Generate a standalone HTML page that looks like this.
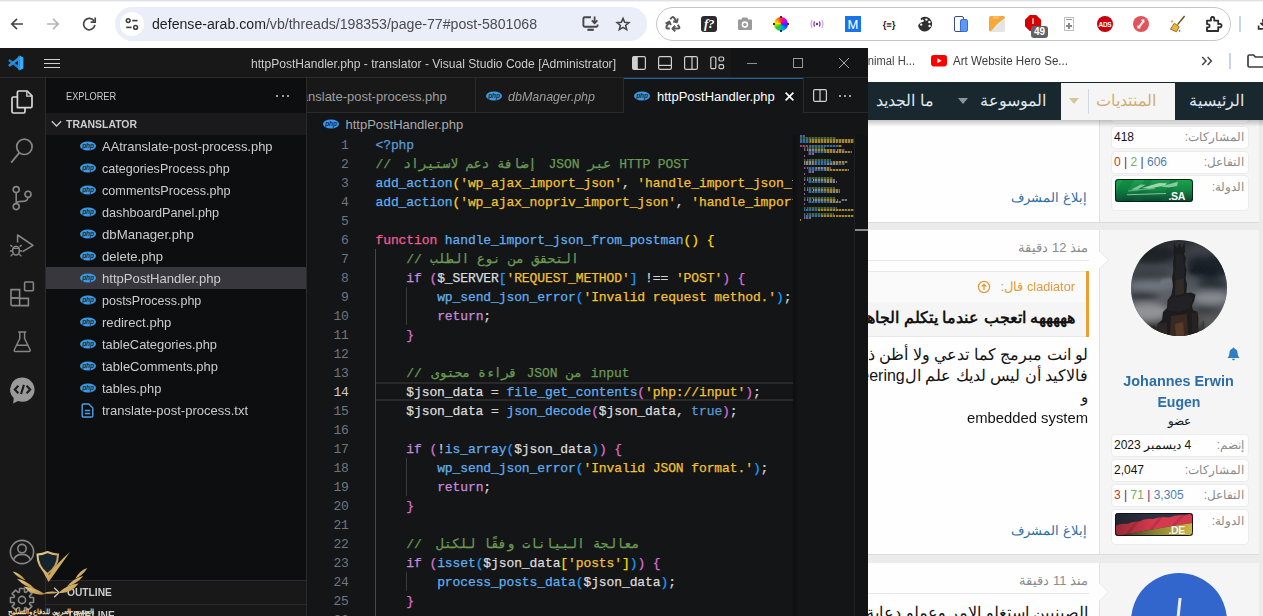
<!DOCTYPE html>
<html lang="en"><head><meta charset="utf-8"><title>screenshot</title>
<style>
*{box-sizing:border-box;margin:0;padding:0}
html,body{width:1263px;height:616px;overflow:hidden;background:#fff;font-family:"Liberation Sans",sans-serif}
#root{position:relative;width:1263px;height:616px;overflow:hidden;background:#fff}
.a{position:absolute}
.t{position:absolute;white-space:nowrap;line-height:1}
svg{position:absolute;overflow:visible}
/* ---------- browser ---------- */
#urlpill{left:115px;top:7px;width:532px;height:34px;border-radius:17px;background:#e9eef8}
#extpill{left:656px;top:7px;width:575px;height:34px;border-radius:17px;border:1px solid #c4c7c5;background:#fff}
/* ---------- forum ---------- */
#forum{left:868px;top:82px;width:395px;height:534px;background:#ebebeb;overflow:hidden}
.ar{direction:rtl;unicode-bidi:isolate}
.box{position:absolute;left:243px;width:138px;height:23px;background:#fefefe;border:1px solid #ececec;border-radius:4px}
.lbl{position:absolute;right:4px;top:0;line-height:21px;font-size:12px;color:#8c8c8c;white-space:nowrap;direction:rtl}
.val{position:absolute;left:2px;top:0;line-height:21px;font-size:12px;color:#141414;white-space:nowrap}
/* ---------- vscode ---------- */
#vs{left:0;top:48px;width:868px;height:568px;background:#181818;overflow:hidden;color:#ccc}
#side{left:46px;top:30px;width:260px;height:538px;background:#0d0e10}
.row{position:absolute;left:0;width:260px;height:22px}
.row .n{position:absolute;left:56px;top:1px;line-height:22px;font-size:13px;color:#cccccc;white-space:nowrap}
.row svg{left:34px;top:6px}
#ed{left:307px;top:65px;width:561px;height:503px;background:#141517;overflow:hidden}
.ln{position:absolute;left:0;width:41.8px;text-align:right;font-family:"Liberation Mono",monospace;font-size:13px;letter-spacing:-0.1px;line-height:19px;height:19px;color:#6e7681;padding-top:1px}
.cl{position:absolute;left:68.5px;white-space:pre;font-family:"Liberation Mono",monospace;font-size:13px;letter-spacing:-0.1px;line-height:19px;height:19px;color:#d8d8d8;padding-top:1px;-webkit-text-stroke:.25px}
.k{color:#ee5d93}.c{color:#6a9955}.f{color:#61afef}.s{color:#f3c231}.p{color:#5a9bd5}.q{color:#c98bdb}
.b1{color:#ffd700}.b2{color:#da70d6}.b3{color:#179fff}.v{color:#dcdcdc}.w{color:#d4d4d4}
.arb{display:inline-block;text-align:center;white-space:nowrap;direction:rtl;letter-spacing:0}
.ig{position:absolute;width:1px;background:#3a3a3a}
</style></head><body><div id="root">
<!-- ================= BROWSER CHROME ================= -->
<div class="a" style="left:0;top:0;width:1263px;height:1px;background:#dde1e7"></div>
<div class="a" style="left:0;top:1px;width:1263px;height:1px;background:#f1f3f6"></div>
<!-- back -->
<svg style="left:9px;top:16px" width="16" height="16" viewBox="0 0 16 16"><path d="M14 8H3M8 2.8L2.8 8L8 13.2" fill="none" stroke="#474747" stroke-width="1.7"/></svg>
<!-- forward -->
<svg style="left:45px;top:16px" width="16" height="16" viewBox="0 0 16 16"><path d="M2 8H13M8 2.8L13.2 8L8 13.2" fill="none" stroke="#b5b5b5" stroke-width="1.7"/></svg>
<!-- reload -->
<svg style="left:81px;top:16px" width="16" height="16" viewBox="0 0 16 16"><path d="M13.2 5.2A5.7 5.7 0 1 0 13.9 8.9" fill="none" stroke="#474747" stroke-width="1.7"/><path d="M14.2 1.6V6.2H9.6" fill="none" stroke="#474747" stroke-width="1.7"/></svg>
<div class="a" id="urlpill"></div>
<div class="a" style="left:120px;top:12px;width:24px;height:24px;border-radius:12px;background:#fff"></div>
<!-- tune icon -->
<svg style="left:125px;top:17px" width="14" height="14" viewBox="0 0 14 14"><circle cx="3.2" cy="3.6" r="1.9" fill="none" stroke="#3c3c3c" stroke-width="1.5"/><path d="M7.2 3.6H12.6" stroke="#3c3c3c" stroke-width="1.6"/><circle cx="10.6" cy="10.4" r="1.9" fill="none" stroke="#3c3c3c" stroke-width="1.5"/><path d="M1.2 10.4H6.6" stroke="#3c3c3c" stroke-width="1.6"/></svg>
<div class="t" style="left:152px;top:16px;font-size:14px;line-height:16px;color:#484b4f;transform-origin:0 0;transform:scaleX(1.0095)"><span style="color:#1f1f1f">defense-arab.com</span>/vb/threads/198353/page-77#post-5801068</div>
<!-- install icon -->
<svg style="left:582px;top:16px" width="18" height="16" viewBox="0 0 18 16"><path d="M9 1.2H2.6Q1.4 1.2 1.4 2.4V9.6Q1.4 10.8 2.6 10.8H14.4Q15.6 10.8 15.6 9.6V8.6" fill="none" stroke="#474747" stroke-width="1.9"/><path d="M5.4 13.8H11.8" stroke="#474747" stroke-width="2.2"/><path d="M12.6 0.6V7M9.8 4.4L12.6 7.2L15.4 4.4" fill="none" stroke="#474747" stroke-width="1.8"/></svg>
<!-- star -->
<svg style="left:616px;top:17px" width="14" height="14" viewBox="0 0 16 16"><path d="M8 1.6L9.9 6.1L14.7 6.5L11 9.7L12.2 14.4L8 11.9L3.8 14.4L5 9.7L1.3 6.5L6.1 6.1Z" fill="none" stroke="#474747" stroke-width="1.8" stroke-linejoin="miter"/></svg>
<div class="a" id="extpill"></div>
<!-- ext 1: recycle arrows -->
<svg style="left:665px;top:16px" width="16" height="16" viewBox="0 0 16 16" fill="none" stroke="#585858" stroke-width="2" stroke-linejoin="round"><path d="M5.4 3.4Q7.4 -.6 9.4 2.2L11.2 5.2"/><path d="M8.2 5.2L11.8 6.2L12.8 2.6"/><path d="M4 6.2L1.6 10.2Q.8 12.4 3 12.6H4.8"/><path d="M.6 7.6L4.4 5.6L5.8 9.2"/><path d="M12.8 8.8L14.2 11Q15 12.6 13 12.6H8"/><path d="M10.2 9.8L7.4 12.6L10.2 15.4"/></svg>
<!-- ext 2: f? -->
<div class="a" style="left:701px;top:16px;width:16px;height:16px;border-radius:3px;background:#2b2b2b"></div>
<div class="t" style="left:702px;top:17px;width:14px;text-align:center;font:italic bold 13px/14px 'Liberation Serif',serif;color:#fff;letter-spacing:-0.5px">f?</div>
<!-- ext 3: camera -->
<svg style="left:737px;top:17px" width="16" height="14" viewBox="0 0 16 14"><path d="M1 3.4Q1 2.4 2 2.4H4.4L5.4 .6H10.2L11.2 2.4H14Q15 2.4 15 3.4V12Q15 13 14 13H2Q1 13 1 12Z" fill="#9a9a9a"/><circle cx="7.9" cy="7.6" r="3.3" fill="#fff"/><circle cx="7.9" cy="7.6" r="1.7" fill="#9a9a9a"/></svg>
<!-- ext 4: colour wheel -->
<div class="a" style="left:774px;top:17px;width:14px;height:14px;border-radius:7px;transform:scaleX(-1);background:conic-gradient(#ff2a2a,#ff9a00 45deg,#ffe600 80deg,#35d000 130deg,#00c8a0 170deg,#0090ff 215deg,#3030ff 255deg,#b000ff 300deg,#ff00a0 335deg,#ff2a2a)"></div>
<div class="a" style="left:780px;top:16px;width:2px;height:2px;background:#333"></div><div class="a" style="left:780px;top:30px;width:2px;height:2px;background:#333"></div><div class="a" style="left:773px;top:23px;width:2px;height:2px;background:#333"></div><div class="a" style="left:787px;top:23px;width:2px;height:2px;background:#333"></div>
<!-- ext 5: broadcast -->
<svg style="left:809px;top:17px" width="16" height="14" viewBox="0 0 16 14" fill="none"><circle cx="8" cy="7" r="1.2" fill="#6a2c91"/><path d="M5.6 4.4Q4.2 7 5.6 9.6M10.4 4.4Q11.8 7 10.4 9.6" stroke="#8e3bb5" stroke-width="1.3"/><path d="M3.2 2.8Q.8 7 3.2 11.2M12.8 2.8Q15.2 7 12.8 11.2" stroke="#d59be8" stroke-width="1.1"/></svg>
<!-- ext 6: M -->
<div class="a" style="left:845px;top:16px;width:16px;height:16px;background:#1a73e8"></div>
<div class="t" style="left:845px;top:17px;width:16px;text-align:center;font-size:13px;line-height:15px;color:#fff">M</div>
<!-- ext 7: {=} -->
<div class="t" style="left:880px;top:17.5px;width:18px;text-align:center;font:bold 9.5px/14px 'Liberation Sans',sans-serif;color:#222;letter-spacing:-0.2px">{&#8801;}</div>
<!-- ext 8: palette -->
<svg style="left:917px;top:16px" width="16" height="16" viewBox="0 0 16 16"><path d="M8 .8A7.2 7.2 0 1 0 8 15.2Q9.4 15.2 9.4 14Q9.4 13.4 9 13Q8.6 12.4 9 11.8Q9.4 11.2 10.2 11.2H12Q15.2 11.2 15.2 7.8Q15.2 .8 8 .8Z" fill="#2f2f2f" transform="rotate(150 8 8)"/><circle cx="4.2" cy="8.6" r="1.2" fill="#fff"/><circle cx="5.6" cy="4.8" r="1.2" fill="#fff"/><circle cx="9.4" cy="3.6" r="1.2" fill="#fff"/><circle cx="12.4" cy="6" r="1.2" fill="#fff"/><circle cx="12.6" cy="10" r="1.2" fill="#fff"/></svg>
<!-- ext 9: devices -->
<div class="a" style="left:954px;top:16px;width:10px;height:16px;border:1.5px solid #3c4a8a;border-radius:2px;background:#fff"></div>
<div class="a" style="left:960px;top:19px;width:8px;height:13px;border:1px solid #3b6fd6;border-radius:2px;background:#5b9bf5"></div>
<!-- ext 10: orange note -->
<svg style="left:989px;top:16px" width="16" height="16" viewBox="0 0 16 16"><rect x="0" y="0" width="16" height="16" rx="2" fill="#ececec"/><path d="M0 2Q0 0 2 0H14Q16 0 16 2L2 15Q0 16 0 14Z" fill="#f6a838"/><path d="M8 8L16 2V14Q16 16 14 16H2Z" fill="#e4e4e4"/><path d="M5 0V3M7 0V3M9 0V3" stroke="#fbd08c" stroke-width="1"/></svg>
<!-- ext 11: red stop with badge -->
<svg style="left:1025px;top:15px" width="16" height="16" viewBox="0 0 16 16"><path d="M4.8 0H11.2L16 4.8V11.2L11.2 16H4.8L0 11.2V4.8Z" fill="#d40000"/><path d="M7.4 3.4Q8 2.6 8.6 3.4V9H7.4Z" fill="#fff"/></svg>
<div class="a" style="left:1031px;top:26px;width:17px;height:12px;border-radius:3px;background:#5f6368"></div>
<div class="t" style="left:1031px;top:27px;width:17px;text-align:center;font:bold 10px/10px 'Liberation Sans',sans-serif;color:#fff">49</div>
<!-- ext 12: doc plus -->
<div class="a" style="left:1064px;top:17px;width:10px;height:14px;border:1px solid #c0c0c0;background:#fff"></div>
<div class="a" style="left:1066px;top:19px;width:6px;height:1px;background:#9a9a9a"></div>
<div class="a" style="left:1066px;top:25px;width:6px;height:2px;background:#8a8a8a"></div><div class="a" style="left:1068px;top:23px;width:2px;height:6px;background:#8a8a8a"></div>
<!-- ext 13: ADS -->
<div class="a" style="left:1097px;top:16px;width:16px;height:16px;border-radius:8px;background:#c9000d"></div>
<div class="t" style="left:1097px;top:21px;width:16px;text-align:center;font:bold 6.5px/7px 'Liberation Sans',sans-serif;color:#fff;letter-spacing:-0.3px">ADS</div>
<!-- ext 14: red circle arrows -->
<div class="a" style="left:1133px;top:16px;width:16px;height:16px;border-radius:8px;background:#e0525c"></div>
<svg style="left:1133px;top:16px" width="16" height="16" viewBox="0 0 16 16" fill="none" stroke="#fff" stroke-width="1.2"><path d="M5 11.6L10.4 4.6M8.4 4.2H10.8V6.6"/><path d="M6.4 11.4L11 5.4M5 9.6V12H7.4" opacity=".85"/></svg>
<!-- ext 15: broom -->
<svg style="left:1169px;top:15px" width="17" height="18" viewBox="0 0 17 18"><path d="M15.6 1L8.6 9.6" stroke="#7a4a1c" stroke-width="1.5"/><path d="M5.4 8.2L10.2 11.8L7.6 16.8L1.4 14.2Z" fill="#e8b53a" stroke="#7a5a1c" stroke-width=".8"/><path d="M3 4.6L3.6 6L5 6.4L3.6 6.8L3 8.2L2.4 6.8L1 6.4L2.4 6Z" fill="#c9a033"/><path d="M10.6 14.6L11 15.6L12 15.9L11 16.2L10.6 17.2L10.2 16.2L9.2 15.9L10.2 15.6Z" fill="#555"/></svg>
<!-- ext 16: puzzle -->
<svg style="left:1205px;top:15px" width="18" height="18" viewBox="0 0 18 18"><path d="M2 5.6H6Q5.4 2 7.6 2Q9.8 2 9.2 5.6H13.2V9Q16.6 8.4 16.6 10.6Q16.6 12.8 13.2 12.2V16H2V12.4Q4.6 12.8 4.6 10.8Q4.6 8.8 2 9.2Z" fill="none" stroke="#2c2c2c" stroke-width="1.8" stroke-linejoin="round"/></svg>
<div class="a" style="left:1239px;top:16px;width:2px;height:16px;background:#c6d5ee"></div>
<svg style="left:1256px;top:17px" width="8" height="14" viewBox="0 0 8 14"><path d="M7 2V8M4.4 5.8L7 8.4" fill="none" stroke="#333" stroke-width="1.7"/><path d="M2.6 8.6V11.8H8" fill="none" stroke="#333" stroke-width="1.7"/></svg>
<!-- bookmarks bar -->
<div class="t" style="left:850px;top:54px;width:65px;text-align:right;font-size:12px;line-height:14px;color:#444;transform-origin:100% 0;transform:scaleX(.93)">Animal H...</div>
<svg style="left:931px;top:55px" width="16" height="12" viewBox="0 0 16 12"><rect x="0" y="0" width="16" height="11.4" rx="2.8" fill="#f00"/><path d="M6.4 3.2V8.2L10.6 5.7Z" fill="#fff"/></svg>
<div class="t" style="left:953px;top:54px;font-size:12px;line-height:14px;color:#3c3c3c;transform-origin:0 0;transform:scaleX(.965)">Art Website Hero Se...</div>
<svg style="left:1201px;top:56px" width="12" height="10" viewBox="0 0 12 10"><path d="M1.2 1L5 5L1.2 9M6.6 1L10.4 5L6.6 9" fill="none" stroke="#444" stroke-width="1.5"/></svg>
<div class="a" style="left:1229px;top:53px;width:2px;height:16px;background:#c6d5ee"></div>
<svg style="left:1247px;top:54px" width="18" height="14" viewBox="0 0 18 14"><path d="M1 2.4Q1 1 2.4 1H6.6L8.4 3H18V13H2.4Q1 13 1 11.6Z" fill="none" stroke="#3c3c3c" stroke-width="1.7"/></svg>
<!-- ================= FORUM ================= -->
<div class="a" id="forum">
 <!-- post 1 (partial) -->
 <div class="a" style="left:0;top:30px;width:231px;height:111px;background:#fefefe"></div>
 <div class="a" style="left:231px;top:30px;width:160px;height:111px;background:#f5f5f5;border-left:1px solid #e2e2e2"></div>
 <div class="a" style="left:0;top:140px;width:391px;height:1px;background:#dcdcdc"></div>
 <div class="box" style="top:19px"></div>
 <div class="box" style="top:44px"><span class="lbl">المشاركات:</span><span class="val">418</span></div>
 <div class="box" style="top:69px;height:23px"><span class="lbl">التفاعل:</span><span class="val"><span style="color:#c0392b">0</span> <span style="color:#5b2a66">|</span> <span style="color:#7fa861">2</span> <span style="color:#444">|</span> <span style="color:#4d7fb0">606</span></span></div>
 <div class="box" style="top:93px;height:36px"><span class="lbl" style="top:1px">الدولة:</span></div>
 <!-- SA flag -->
 <svg style="left:247px;top:97px" width="78" height="23" viewBox="0 0 78 23"><defs><linearGradient id="sa" x1="0" y1="0" x2="0" y2="1"><stop offset="0" stop-color="#1ba44d"/><stop offset=".45" stop-color="#138a43"/><stop offset="1" stop-color="#0a4034"/></linearGradient><filter id="fb"><feGaussianBlur stdDeviation=".55"/></filter><clipPath id="fcs"><rect width="78" height="23" rx="3"/></clipPath></defs><g clip-path="url(#fcs)"><rect width="78" height="23" fill="url(#sa)"/><path d="M8 0L20 0L6 23L-4 23ZM30 0L38 0L26 23L18 23ZM56 0L62 0L52 23L46 23Z" fill="#0c6a36" opacity=".35"/><g filter="url(#fb)" fill="#d9f2df"><path d="M16 10.5L26 5.4L31 5.8L22 10.8Z" opacity=".55"/><path d="M27 9L44 4L52 4.2L50 6.6L34 9.6Z" opacity=".7"/><path d="M46 7.4L60 3.4L63 3L62 7L54 8.4Z" opacity=".6"/><path d="M13 11.6L40 8.6L40 10L13 12.6Z" opacity=".4"/><path d="M12 15.2L51 14L51 15L12 16.2Z" opacity=".6"/></g></g><rect x=".5" y=".5" width="77" height="22" rx="3" fill="none" stroke="#062016"/><text x="53.6" y="21" font-family="Liberation Sans" font-weight="bold" font-size="10.5" fill="#fff" letter-spacing="-.4">.SA</text></svg>
 <div class="t ar" style="left:100px;top:107px;width:119px;text-align:right;font-size:13px;line-height:18px;color:#2f6ea5">إبلاغ المشرف</div>

 <!-- post 2 -->
 <div class="a" style="left:0;top:148px;width:231px;height:325px;background:#fefefe"></div>
 <div class="a" style="left:231px;top:148px;width:160px;height:325px;background:#f5f5f5;border-left:1px solid #e2e2e2"></div>
 <div class="a" style="left:0;top:472px;width:391px;height:1px;background:#dcdcdc"></div>
 <svg style="left:231px;top:169px" width="10" height="18" viewBox="0 0 10 18"><path d="M0 0L9.5 9L0 18Z" fill="#fefefe"/><path d="M.5 0L9.5 9L.5 18" fill="none" stroke="#e6e6e6" stroke-width="1"/></svg>
 <div class="t ar" style="left:100px;top:157px;width:120px;text-align:right;font-size:13px;line-height:18px;color:#8c8c8c">منذ 12 دقيقة</div>
 <div class="a" style="left:0;top:178px;width:221px;height:1px;background:#e7e7e7"></div>
 <!-- quote -->
 <div class="a" style="left:0;top:189px;width:218px;height:31px;background:#fafafa;border-top:1px solid #e7e7e7"></div>
 <div class="a" style="left:0;top:220px;width:218px;height:35px;background:#f5f5f5;border-bottom:1px solid #e7e7e7"></div>
 <div class="a" style="left:218px;top:189px;width:3px;height:66px;background:#e9a031"></div>
 <div class="t" style="left:159px;top:196px;font-size:13px;line-height:18px;color:#e39a3b;transform-origin:0 0;transform:scaleX(.975)">cladiator</div>
 <div class="t ar" style="left:110px;top:196px;width:45px;text-align:right;font-size:13px;line-height:18px;color:#e39a3b">قال:</div>
 <svg style="left:109px;top:198px" width="14" height="14" viewBox="0 0 14 14"><circle cx="7" cy="7" r="5.6" fill="none" stroke="#e39a3b" stroke-width="1.3"/><path d="M7 10V4.4M4.6 6.6L7 4.2L9.4 6.6" fill="none" stroke="#e39a3b" stroke-width="1.3"/></svg>
 <div class="t ar" style="left:-120px;top:225px;width:327px;text-align:right;font-size:16px;font-weight:bold;line-height:22px;color:#141414">هههههه اتعجب عندما يتكلم الجاهل</div>
 <!-- body -->
 <div class="t ar" style="left:-180px;top:262px;width:400px;text-align:right;font-size:16px;line-height:21px;color:#141414">لو انت مبرمج كما تدعي ولا أظن ذلك</div>
 <div class="t ar" style="left:-180px;top:283px;width:400px;text-align:right;font-size:16px;line-height:21px;color:#141414">فالاكيد أن ليس لديك علم الsoftware engineering</div>
 <div class="t ar" style="left:100px;top:304px;width:120px;text-align:right;font-size:15px;line-height:21px;color:#141414">و</div>
 <div class="t" style="left:98.5px;top:325px;font-size:15px;line-height:21px;color:#141414;transform-origin:0 0;transform:scaleX(.987)">embedded system</div>
 <div class="t ar" style="left:100px;top:440px;width:119px;text-align:right;font-size:13px;line-height:18px;color:#2f6ea5">إبلاغ المشرف</div>
 <!-- avatar 2 -->
 <svg style="left:263px;top:158px" width="96" height="96" viewBox="0 0 96 96"><defs><clipPath id="av"><circle cx="48" cy="48" r="48"/></clipPath><linearGradient id="sky" x1="0" y1="0" x2="0" y2="1"><stop offset="0" stop-color="#2a2d32"/><stop offset=".3" stop-color="#454a52"/><stop offset=".6" stop-color="#5c6067"/><stop offset=".85" stop-color="#4e4e4f"/><stop offset="1" stop-color="#262422"/></linearGradient><filter id="bl" x="-30%" y="-30%" width="160%" height="160%"><feGaussianBlur stdDeviation="3.2"/></filter><filter id="bl2" x="-30%" y="-30%" width="160%" height="160%"><feGaussianBlur stdDeviation="1.8"/></filter><filter id="bl1"><feGaussianBlur stdDeviation=".55"/></filter></defs><g clip-path="url(#av)"><rect width="96" height="96" fill="url(#sky)"/>
 <g filter="url(#bl)"><ellipse cx="20" cy="14" rx="26" ry="9" fill="#1f2226"/><ellipse cx="78" cy="26" rx="22" ry="13" fill="#1f2329"/><ellipse cx="72" cy="10" rx="16" ry="6" fill="#3d4249"/><ellipse cx="18" cy="34" rx="20" ry="6" fill="#3a3f46"/><ellipse cx="22" cy="46" rx="24" ry="5" fill="#727880"/><ellipse cx="12" cy="56" rx="16" ry="4" fill="#2e3238"/><ellipse cx="82" cy="44" rx="16" ry="5" fill="#2b3037"/><ellipse cx="80" cy="58" rx="18" ry="6" fill="#878b90"/><ellipse cx="74" cy="70" rx="14" ry="4" fill="#3b3d41"/><ellipse cx="16" cy="72" rx="22" ry="9" fill="#909294"/><ellipse cx="84" cy="82" rx="14" ry="6" fill="#5a5b5c"/><ellipse cx="12" cy="90" rx="18" ry="6" fill="#242322"/><ellipse cx="48" cy="98" rx="40" ry="6" fill="#1c1a18"/></g>
 <g filter="url(#bl2)"><path d="M30 40Q40 36 46 40L44 44Q36 42 30 44Z" fill="#7f858c" opacity=".6"/><path d="M58 30Q70 24 84 30L82 34Q70 30 60 34Z" fill="#11151a" opacity=".8"/></g>
 <g filter="url(#bl1)"><path d="M43.4 1.5L44.6 5.5L46.4 8L47.6 4L49.4 4L50.4 8L52.2 5.5L53.6 1.5L54 12L53 14L55 18L54 24L55.6 30L54.6 38L56 44L55.4 53L60 52.6L64.4 54.6L63.4 60L61 66L62 70L66.6 72L67.4 78L67 96L26 96L26.6 84L31 80L32 72L36 68L36.6 60L40.4 55L42 46L41 38L42.4 30L42 22L43 16L42.2 12Z" fill="#1b1c1e"/>
 <path d="M45 14L52 14L53 30L53.6 44L53 53L44 55L43.6 44L44.4 30Z" fill="#242325"/>
 <path d="M44.6 40L52.6 39L53 54L44 56Z" fill="#4d3a2c" opacity=".35"/>
 <path d="M38 58L56 55L62 58L59 68L48 72L37 70Z" fill="#222326"/>
 <path d="M40 76L56 74L57 96L39 96Z" fill="#4e3525" opacity=".6"/><path d="M44 84L52 82L53 96L45 96Z" fill="#8a562c" opacity=".4"/>
 <path d="M61 73L66 72L67 92L61 92Z" fill="#262223"/><path d="M27 84L36 82L36 96L26 96Z" fill="#2a2625"/>
 <path d="M70 84L73 80L74 96L70 96Z" fill="#3b3a3b"/><path d="M16 88L24 86L26 96L14 96Z" fill="#2a2928"/></g>
 </g></svg>
 <!-- bell -->
 <svg style="left:359px;top:265px" width="13" height="14" viewBox="0 0 13 14"><path d="M6.5 .6Q7.4 .6 7.5 1.6Q10.6 2.6 10.6 6.2Q10.6 9 12.2 10.2V11H.8V10.2Q2.4 9 2.4 6.2Q2.4 2.6 5.5 1.6Q5.6 .6 6.5 .6Z" fill="#2f80c3"/><path d="M5 11.8H8Q7.8 13.4 6.5 13.4Q5.2 13.4 5 11.8Z" fill="#2f80c3"/></svg>
 <div class="t" style="left:231px;top:288px;width:160px;text-align:center;font-size:15px;font-weight:bold;line-height:21px;color:#2c6ea8"><span style="display:inline-block;transform:scaleX(.96)">Johannes Erwin</span><br><span style="display:inline-block;transform:scaleX(.94)">Eugen</span></div>
 <div class="t ar" style="left:231px;top:330px;width:160px;text-align:center;font-size:12px;line-height:18px;color:#141414">عضو</div>
 <div class="box" style="top:352px"><span class="lbl">إنضم:</span><span class="val ar" style="direction:rtl">4 ديسمبر 2023</span></div>
 <div class="box" style="top:377px"><span class="lbl">المشاركات:</span><span class="val">2,047</span></div>
 <div class="box" style="top:402px"><span class="lbl">التفاعل:</span><span class="val"><span style="color:#c0392b">3</span> <span style="color:#5b2a66">|</span> <span style="color:#7fa861">71</span> <span style="color:#5b2a66">|</span> <span style="color:#4d7fb0">3,305</span></span></div>
 <div class="box" style="top:427px;height:36px"><span class="lbl" style="top:1px">الدولة:</span></div>
 <!-- DE flag -->
 <svg style="left:247px;top:431px" width="78" height="23" viewBox="0 0 78 23"><defs><clipPath id="fc"><rect width="78" height="23" rx="3"/></clipPath><linearGradient id="deg" x1="0" y1="0" x2="1" y2="0"><stop offset="0" stop-color="#4f4a22"/><stop offset=".5" stop-color="#8c8732"/><stop offset="1" stop-color="#cdb945"/></linearGradient><linearGradient id="dsh" x1="0" y1="0" x2="1" y2="0"><stop offset="0" stop-color="#000" stop-opacity=".3"/><stop offset=".5" stop-color="#000" stop-opacity="0"/></linearGradient></defs><g clip-path="url(#fc)"><rect width="78" height="23" fill="#2e3240"/><path d="M0 13Q6 10 12 11Q18 8 24 8.6Q30 5 38 6Q46 3 54 4.4Q62 1 70 2.2L78 0V10Q62 12 46 15Q28 18 10 21.4L0 23Z" fill="#d63a4e"/><path d="M10 21.4Q28 18 46 15Q62 12 78 10V23H6Z" fill="url(#deg)"/><path d="M20 9L24 8.6L14 21L10 21.4ZM44 4.6L48 4L38 16.6L34 17.2ZM66 2.6L70 2.2L60 13L56 13.6Z" fill="#000" opacity=".12"/><rect width="78" height="23" fill="url(#dsh)"/></g><rect x=".5" y=".5" width="77" height="22" rx="3" fill="none" stroke="#121216"/><text x="53.6" y="21" font-family="Liberation Sans" font-weight="bold" font-size="10.5" fill="#f4f4f4" letter-spacing="-.4">.DE</text></svg>

 <!-- post 3 -->
 <div class="a" style="left:0;top:481px;width:231px;height:60px;background:#fefefe"></div>
 <div class="a" style="left:231px;top:481px;width:160px;height:60px;background:#f5f5f5;border-left:1px solid #e2e2e2"></div>
 <svg style="left:231px;top:501px" width="10" height="18" viewBox="0 0 10 18"><path d="M0 0L9.5 9L0 18Z" fill="#fefefe"/><path d="M.5 0L9.5 9L.5 18" fill="none" stroke="#e6e6e6" stroke-width="1"/></svg>
 <div class="t ar" style="left:100px;top:490px;width:120px;text-align:right;font-size:13px;line-height:18px;color:#8c8c8c">منذ 11 دقيقة</div>
 <div class="a" style="left:0;top:511px;width:221px;height:1px;background:#e7e7e7"></div>
 <div class="t ar" style="left:-180px;top:520px;width:400px;text-align:right;font-size:16px;line-height:21px;color:#141414">الصينيين استغلو الامر وعملو دعاية</div>
 <div class="a" style="left:263px;top:491px;width:96px;height:96px;border-radius:48px;background:#3366cc"></div>
 <div class="a" style="left:309px;top:516px;width:3px;height:30px;background:#e8eefc;transform:skewX(-6deg)"></div>

 <!-- nav bar on top -->
 <div class="a" style="left:0;top:38px;width:395px;height:7px;background:linear-gradient(rgba(0,0,0,.22),rgba(0,0,0,0))"></div>
 <div class="a" style="left:0;top:0;width:395px;height:38px;background:#19282f"></div>
 <div class="a" style="left:193px;top:1px;width:114px;height:37px;background:#f5f5f5"></div>
 <div class="a" style="left:220px;top:7px;width:1px;height:25px;background:#cfd9e6"></div>
 <div class="t ar" style="left:305px;top:6px;width:87px;text-align:center;font-size:16px;line-height:26px;color:#dfe6f0">الرئيسية</div>
 <div class="t ar" style="left:215px;top:6px;width:86px;text-align:center;font-size:16px;line-height:26px;color:#cfae76">المنتديات</div>
 <svg style="left:201px;top:16px" width="10" height="6" viewBox="0 0 10 6"><path d="M0 0H10L5 6Z" fill="#d8c49a"/></svg>
 <div class="t ar" style="left:105px;top:6px;width:80px;text-align:center;font-size:16px;line-height:26px;color:#dfe6f0">الموسوعة</div>
 <svg style="left:90px;top:16px" width="10" height="6" viewBox="0 0 10 6"><path d="M0 0H10L5 6Z" fill="#8a949c"/></svg>
 <div class="t ar" style="left:0px;top:6px;width:74px;text-align:center;font-size:16px;line-height:26px;color:#dfe6f0">ما الجديد</div>
</div>
<!-- ================= VS CODE ================= -->
<div class="a" id="vs">
<div class="a" style="left:731px;top:0;width:137px;height:29px;background:#131416"></div>
<div class="a" style="left:0;top:29px;width:868px;height:1px;background:#2b2b2b"></div>
<svg style="left:8px;top:7px" width="16" height="16" viewBox="0 0 16 16"><path d="M.9 5L11.6 13.2" stroke="#1f7dcb" stroke-width="2.6"/><path d="M.9 11L11.6 2.8" stroke="#2b8ddb" stroke-width="2.6"/><path d="M11.4 .5L15.4 2.4V13.6L11.4 15.5Z" fill="#3ba9f3"/><path d="M11.4 .5V15.5L10 14.2V1.8Z" fill="#2f98e6"/></svg>
<div class="a" style="left:44px;top:11px;width:16px;height:1px;background:#d0d0d0"></div>
<div class="a" style="left:44px;top:15px;width:16px;height:1px;background:#d0d0d0"></div>
<div class="a" style="left:44px;top:19px;width:16px;height:1px;background:#d0d0d0"></div>
<div class="t" style="left:251px;top:9px;font-size:12px;line-height:15px;color:#cccccc;transform-origin:0 0;transform:scaleX(1.0065)">httpPostHandler.php - translator - Visual Studio Code [Administrator]</div>
<svg style="left:632px;top:8px" width="14" height="14" viewBox="0 0 14 14"><rect x=".6" y=".6" width="12.8" height="12.8" rx="1.6" fill="none" stroke="#d0d0d0" stroke-width="1.2"/><path d="M.6 2Q.6 .6 2 .6H5.8V13.4H2Q.6 13.4 .6 12Z" fill="#d0d0d0"/></svg>
<svg style="left:658px;top:8px" width="14" height="14" viewBox="0 0 14 14"><rect x=".6" y=".6" width="12.8" height="12.8" rx="1.6" fill="none" stroke="#d0d0d0" stroke-width="1.2"/><path d="M.6 9.4H13.4" stroke="#d0d0d0" stroke-width="1.2"/></svg>
<svg style="left:684px;top:8px" width="14" height="14" viewBox="0 0 14 14"><rect x=".6" y=".6" width="12.8" height="12.8" rx="1.6" fill="none" stroke="#d0d0d0" stroke-width="1.2"/><path d="M8 .6V13.4" stroke="#d0d0d0" stroke-width="1.2"/></svg>
<svg style="left:710px;top:8px" width="15" height="14" viewBox="0 0 15 14"><rect x=".8" y="1" width="5" height="11.6" rx="1.2" fill="none" stroke="#d0d0d0" stroke-width="1.2"/><rect x="9" y="1" width="4.6" height="4" rx="1.2" fill="none" stroke="#d0d0d0" stroke-width="1.2"/><rect x="9" y="8.6" width="4.6" height="4" rx="1.2" fill="none" stroke="#d0d0d0" stroke-width="1.2"/></svg>
<div class="a" style="left:747px;top:15px;width:10px;height:1px;background:#909090"></div>
<div class="a" style="left:793px;top:10px;width:10px;height:10px;border:1px solid #9a9a9a"></div>
<svg style="left:839px;top:10px" width="10" height="10" viewBox="0 0 10 10"><path d="M0 0L10 10M10 0L0 10" stroke="#a8a8a8" stroke-width="1"/></svg>
<div class="a" style="left:45px;top:30px;width:1px;height:538px;background:#2b2b2b"></div>
<svg style="left:10px;top:41px" width="24" height="26" viewBox="0 0 24 26" fill="none" stroke="#d7d7d7" stroke-width="1.7" stroke-linejoin="round"><path d="M7.4 18.6V3.4Q7.4 2 8.8 2H17.2L22 6.8V17.2Q22 18.6 20.6 18.6Z"/><path d="M16.8 2.2V7.2H21.8" stroke-width="1.3"/><path d="M7.4 8H3.4Q2 8 2 9.4V22.6Q2 24 3.4 24H13.6Q15 24 15 22.6V18.6"/></svg>
<svg style="left:10px;top:90px" width="24" height="26" viewBox="0 0 24 26" fill="none" stroke="#868686" stroke-width="1.7"><circle cx="14.4" cy="8.8" r="7.7"/><path d="M9.4 14.6L1.2 24.6"/></svg>
<svg style="left:11px;top:137px" width="22" height="26" viewBox="0 0 22 26" fill="none" stroke="#868686" stroke-width="1.6"><circle cx="5.2" cy="4.6" r="3"/><circle cx="5.2" cy="21.6" r="3"/><circle cx="17" cy="9.2" r="3"/><path d="M5.2 7.6V18.6M17 12.2Q17 16.4 11 16.4Q5.2 16.4 5.2 18.6"/></svg>
<svg style="left:9px;top:185px" width="26" height="26" viewBox="0 0 26 26" fill="none" stroke="#868686" stroke-width="1.6" stroke-linejoin="round"><path d="M8.6 9.6V2L24 12.4L13.6 18.6"/><ellipse cx="7" cy="17.6" rx="3.4" ry="4.4"/><path d="M3.6 15.4H10.4M3.4 13.6L1.2 12M10.6 13.6L12.8 12M3.4 18H.8M10.6 18H13.2M3.8 21L1.6 23.4M10.2 21L12.4 23.4" stroke-width="1.3"/></svg>
<svg style="left:10px;top:233px" width="25" height="26" viewBox="0 0 25 26" fill="none" stroke="#868686" stroke-width="1.6"><path d="M1 8.6H9.6V17.4H18.4V24.6H2.4Q1 24.6 1 23.2ZM1 17H9.6V24.6M9.6 17.4V24.6"/><path d="M1 17H9.6" /><rect x="14.6" y="1" width="8.8" height="8.8" rx="1"/></svg>
<svg style="left:12.8px;top:283px" width="18.4" height="22" viewBox="0 0 20 24" fill="none" stroke="#868686" stroke-width="1.6" stroke-linejoin="round"><path d="M5.6 1.2H14.4M7.4 1.2V8.2L1.4 20.4Q.8 22.4 2.8 22.4H17.2Q19.2 22.4 18.6 20.4L12.6 8.2V1.2M4 15.6H16"/></svg>
<svg style="left:9.5px;top:328.5px" width="25" height="27" viewBox="0 0 24 26"><path d="M12 .6A11.6 11.6 0 0 1 12 23.8Q9.6 23.8 7.6 23L3 25.6L3.6 20.4A11.6 11.6 0 0 1 12 .6Z" fill="#9a9a9a"/><path d="M8 8.4L4.6 12L8 15.6M16 8.4L19.4 12L16 15.6M13.4 7.6L10.6 16.4" fill="none" stroke="#1a1a1a" stroke-width="2"/></svg>
<svg style="left:9px;top:491px" width="26" height="26" viewBox="0 0 26 26" fill="none" stroke="#868686" stroke-width="1.6"><circle cx="13" cy="13" r="11.6"/><circle cx="13" cy="9.6" r="4.2"/><path d="M4.6 20.8Q6.6 15.4 13 15.4Q19.4 15.4 21.4 20.8"/></svg>
<svg style="left:9px;top:539px" width="26" height="26" viewBox="0 0 26 26" fill="none" stroke="#868686" stroke-width="1.6" stroke-linejoin="round"><path d="M10.44 5.00L10.54 1.46L15.46 1.46L15.56 5.00L16.84 5.53L19.42 3.10L22.90 6.58L20.47 9.16L21.00 10.44L24.54 10.54L24.54 15.46L21.00 15.56L20.47 16.84L22.90 19.42L19.42 22.90L16.84 20.47L15.56 21.00L15.46 24.54L10.54 24.54L10.44 21.00L9.16 20.47L6.58 22.90L3.10 19.42L5.53 16.84L5.00 15.56L1.46 15.46L1.46 10.54L5.00 10.44L5.53 9.16L3.10 6.58L6.58 3.10L9.16 5.53Z"/><circle cx="13" cy="13" r="3.6"/></svg>
<div class="a" id="side">
<div class="t" style="left:20px;top:12px;font-size:11px;line-height:13px;color:#cccccc;transform-origin:0 0;transform:scaleX(.835)">EXPLORER</div>
<div class="a" style="left:230.0px;top:17px;width:2.4px;height:2.4px;border-radius:2px;background:#cccccc"></div>
<div class="a" style="left:235.5px;top:17px;width:2.4px;height:2.4px;border-radius:2px;background:#cccccc"></div>
<div class="a" style="left:241.0px;top:17px;width:2.4px;height:2.4px;border-radius:2px;background:#cccccc"></div>
<div class="a" style="left:0;top:35px;width:260px;height:22px;background:#1a1a1c"></div>
<svg style="left:5px;top:42px" width="11" height="8" viewBox="0 0 11 8"><path d="M.8 1.2L5.5 6L10.2 1.2" fill="none" stroke="#cccccc" stroke-width="1.3"/></svg>
<div class="t" style="left:20px;top:40px;font-size:11px;font-weight:bold;line-height:13px;color:#cccccc;transform-origin:0 0;transform:scaleX(.95)">TRANSLATOR</div>
<div class="row" style="top:57px"><svg width="16" height="10" viewBox="0 0 16 10"><ellipse cx="8" cy="5" rx="8" ry="4.6" fill="#3f97e3"/><text x="8" y="7.4" text-anchor="middle" font-family="Liberation Sans" font-style="italic" font-weight="bold" font-size="6.6" fill="#0f2f55" letter-spacing="-0.2">php</text></svg><span class="n" style="transform-origin:0 0;transform:scaleX(0.996)">AAtranslate-post-process.php</span></div>
<div class="row" style="top:79px"><svg width="16" height="10" viewBox="0 0 16 10"><ellipse cx="8" cy="5" rx="8" ry="4.6" fill="#3f97e3"/><text x="8" y="7.4" text-anchor="middle" font-family="Liberation Sans" font-style="italic" font-weight="bold" font-size="6.6" fill="#0f2f55" letter-spacing="-0.2">php</text></svg><span class="n" style="transform-origin:0 0;transform:scaleX(0.965)">categoriesProcess.php</span></div>
<div class="row" style="top:101px"><svg width="16" height="10" viewBox="0 0 16 10"><ellipse cx="8" cy="5" rx="8" ry="4.6" fill="#3f97e3"/><text x="8" y="7.4" text-anchor="middle" font-family="Liberation Sans" font-style="italic" font-weight="bold" font-size="6.6" fill="#0f2f55" letter-spacing="-0.2">php</text></svg><span class="n" style="transform-origin:0 0;transform:scaleX(0.9725)">commentsProcess.php</span></div>
<div class="row" style="top:123px"><svg width="16" height="10" viewBox="0 0 16 10"><ellipse cx="8" cy="5" rx="8" ry="4.6" fill="#3f97e3"/><text x="8" y="7.4" text-anchor="middle" font-family="Liberation Sans" font-style="italic" font-weight="bold" font-size="6.6" fill="#0f2f55" letter-spacing="-0.2">php</text></svg><span class="n" style="transform-origin:0 0;transform:scaleX(0.976)">dashboardPanel.php</span></div>
<div class="row" style="top:145px"><svg width="16" height="10" viewBox="0 0 16 10"><ellipse cx="8" cy="5" rx="8" ry="4.6" fill="#3f97e3"/><text x="8" y="7.4" text-anchor="middle" font-family="Liberation Sans" font-style="italic" font-weight="bold" font-size="6.6" fill="#0f2f55" letter-spacing="-0.2">php</text></svg><span class="n" style="transform-origin:0 0;transform:scaleX(1.016)">dbManager.php</span></div>
<div class="row" style="top:167px"><svg width="16" height="10" viewBox="0 0 16 10"><ellipse cx="8" cy="5" rx="8" ry="4.6" fill="#3f97e3"/><text x="8" y="7.4" text-anchor="middle" font-family="Liberation Sans" font-style="italic" font-weight="bold" font-size="6.6" fill="#0f2f55" letter-spacing="-0.2">php</text></svg><span class="n" style="transform-origin:0 0;transform:scaleX(1.004)">delete.php</span></div>
<div class="row" style="top:189px;background:#37373d"><svg width="16" height="10" viewBox="0 0 16 10"><ellipse cx="8" cy="5" rx="8" ry="4.6" fill="#3f97e3"/><text x="8" y="7.4" text-anchor="middle" font-family="Liberation Sans" font-style="italic" font-weight="bold" font-size="6.6" fill="#0f2f55" letter-spacing="-0.2">php</text></svg><span class="n" style="transform-origin:0 0;transform:scaleX(1.008)">httpPostHandler.php</span></div>
<div class="row" style="top:211px"><svg width="16" height="10" viewBox="0 0 16 10"><ellipse cx="8" cy="5" rx="8" ry="4.6" fill="#3f97e3"/><text x="8" y="7.4" text-anchor="middle" font-family="Liberation Sans" font-style="italic" font-weight="bold" font-size="6.6" fill="#0f2f55" letter-spacing="-0.2">php</text></svg><span class="n" style="transform-origin:0 0;transform:scaleX(0.961)">postsProcess.php</span></div>
<div class="row" style="top:233px"><svg width="16" height="10" viewBox="0 0 16 10"><ellipse cx="8" cy="5" rx="8" ry="4.6" fill="#3f97e3"/><text x="8" y="7.4" text-anchor="middle" font-family="Liberation Sans" font-style="italic" font-weight="bold" font-size="6.6" fill="#0f2f55" letter-spacing="-0.2">php</text></svg><span class="n" style="transform-origin:0 0;transform:scaleX(1.009)">redirect.php</span></div>
<div class="row" style="top:255px"><svg width="16" height="10" viewBox="0 0 16 10"><ellipse cx="8" cy="5" rx="8" ry="4.6" fill="#3f97e3"/><text x="8" y="7.4" text-anchor="middle" font-family="Liberation Sans" font-style="italic" font-weight="bold" font-size="6.6" fill="#0f2f55" letter-spacing="-0.2">php</text></svg><span class="n" style="transform-origin:0 0;transform:scaleX(0.988)">tableCategories.php</span></div>
<div class="row" style="top:277px"><svg width="16" height="10" viewBox="0 0 16 10"><ellipse cx="8" cy="5" rx="8" ry="4.6" fill="#3f97e3"/><text x="8" y="7.4" text-anchor="middle" font-family="Liberation Sans" font-style="italic" font-weight="bold" font-size="6.6" fill="#0f2f55" letter-spacing="-0.2">php</text></svg><span class="n" style="transform-origin:0 0;transform:scaleX(0.997)">tableComments.php</span></div>
<div class="row" style="top:299px"><svg width="16" height="10" viewBox="0 0 16 10"><ellipse cx="8" cy="5" rx="8" ry="4.6" fill="#3f97e3"/><text x="8" y="7.4" text-anchor="middle" font-family="Liberation Sans" font-style="italic" font-weight="bold" font-size="6.6" fill="#0f2f55" letter-spacing="-0.2">php</text></svg><span class="n" style="transform-origin:0 0;transform:scaleX(0.988)">tables.php</span></div>
<div class="row" style="top:321px"><svg style="left:35px;top:4px" width="13" height="15" viewBox="0 0 13 15" fill="none" stroke="#4b9ee6" stroke-width="1.4" stroke-linejoin="round"><path d="M1.2 2.2Q1.2 1 2.4 1H7.8L11.8 5V12.8Q11.8 14 10.6 14H2.4Q1.2 14 1.2 12.8Z"/><path d="M3.8 7.6H9.2M3.8 10.6H9.2" stroke-width="1.5"/></svg><span class="n" style="transform-origin:0 0;transform:scaleX(1.001)">translate-post-process.txt</span></div>
<div class="a" style="left:0;top:502px;width:260px;height:36px;background:#181818"></div>
<div class="a" style="left:0;top:502px;width:260px;height:1px;background:#2b2b2b"></div>
<div class="a" style="left:0;top:526px;width:260px;height:1px;background:#2b2b2b"></div>
<svg style="left:7px;top:509px" width="8" height="11" viewBox="0 0 8 11"><path d="M1.2 .8L6 5.5L1.2 10.2" fill="none" stroke="#cccccc" stroke-width="1.3"/></svg>
<div class="t" style="left:21px;top:508px;font-size:11px;font-weight:bold;line-height:13px;color:#cccccc;transform-origin:0 0;transform:scaleX(.93)">OUTLINE</div>
<svg style="left:7px;top:533px" width="8" height="11" viewBox="0 0 8 11"><path d="M1.2 .8L6 5.5L1.2 10.2" fill="none" stroke="#cccccc" stroke-width="1.3"/></svg>
<div class="t" style="left:21px;top:531px;font-size:11px;font-weight:bold;line-height:13px;color:#cccccc;transform-origin:0 0;transform:scaleX(.93)">TIMELINE</div>
</div>
<div class="a" style="left:306px;top:30px;width:1px;height:538px;background:#2b2b2b"></div>
<div class="a" style="left:307px;top:30px;width:561px;height:35px;background:#181818;overflow:hidden">
<div class="a" style="left:0;top:34px;width:561px;height:1px;background:#2b2b2b"></div>
<div class="t" style="left:-31.5px;top:11px;font-size:13px;line-height:15px;color:#9d9d9d">AAtranslate-post-process.php</div>
<div class="a" style="left:168px;top:0;width:1px;height:35px;background:#2b2b2b"></div>
<svg style="left:179px;top:13px" width="16" height="10" viewBox="0 0 16 10"><ellipse cx="8" cy="5" rx="8" ry="4.6" fill="#3f97e3"/><text x="8" y="7.4" text-anchor="middle" font-family="Liberation Sans" font-style="italic" font-weight="bold" font-size="6.6" fill="#0f2f55" letter-spacing="-0.2">php</text></svg>
<div class="t" style="left:201px;top:11px;font-size:13px;font-style:italic;line-height:15px;color:#9d9d9d;transform-origin:0 0;transform:scaleX(.96)">dbManager.php</div>
<div class="a" style="left:316px;top:0;width:1px;height:35px;background:#2b2b2b"></div>
<div class="a" style="left:317px;top:0;width:179px;height:35px;background:#141517"></div>
<div class="a" style="left:317px;top:0;width:179px;height:1px;background:#1c64a6"></div>
<svg style="left:327px;top:13px" width="16" height="10" viewBox="0 0 16 10"><ellipse cx="8" cy="5" rx="8" ry="4.6" fill="#3f97e3"/><text x="8" y="7.4" text-anchor="middle" font-family="Liberation Sans" font-style="italic" font-weight="bold" font-size="6.6" fill="#0f2f55" letter-spacing="-0.2">php</text></svg>
<div class="t" style="left:350px;top:11px;font-size:13px;line-height:15px;color:#ffffff">httpPostHandler.php</div>
<svg style="left:477.5px;top:14px" width="9" height="9" viewBox="0 0 9 9"><path d="M.6 .6L8.4 8.4M8.4 .6L.6 8.4" stroke="#ffffff" stroke-width="1.6"/></svg>
<div class="a" style="left:497px;top:0;width:64px;height:34px;background:#151618"></div>
<div class="a" style="left:496px;top:0;width:1px;height:35px;background:#2b2b2b"></div>
<svg style="left:506px;top:11px" width="14" height="13" viewBox="0 0 14 13"><rect x=".6" y=".6" width="12.8" height="11.8" rx="1.4" fill="none" stroke="#d0d0d0" stroke-width="1.2"/><path d="M7 .6V12.4" stroke="#d0d0d0" stroke-width="1.2"/></svg>
<div class="a" style="left:531.5px;top:17px;width:2.4px;height:2.4px;border-radius:2px;background:#d0d0d0"></div>
<div class="a" style="left:536.7px;top:17px;width:2.4px;height:2.4px;border-radius:2px;background:#d0d0d0"></div>
<div class="a" style="left:541.9px;top:17px;width:2.4px;height:2.4px;border-radius:2px;background:#d0d0d0"></div>
</div>
<div class="a" id="ed">
<svg style="left:16px;top:6px" width="16" height="10" viewBox="0 0 16 10"><ellipse cx="8" cy="5" rx="8" ry="4.6" fill="#3f97e3"/><text x="8" y="7.4" text-anchor="middle" font-family="Liberation Sans" font-style="italic" font-weight="bold" font-size="6.6" fill="#0f2f55" letter-spacing="-0.2">php</text></svg>
<div class="t" style="left:38.5px;top:4px;font-size:13px;line-height:15px;color:#a9a9a9">httpPostHandler.php</div>
<div class="a" style="left:68px;top:269px;width:418px;height:19px;border-top:2px solid #292929;border-bottom:2px solid #292929"></div>
<div class="ig" style="left:68px;top:136px;height:367px;background:#484848"></div>
<div class="ig" style="left:99px;top:174px;height:38px"></div>
<div class="ig" style="left:99px;top:345px;height:38px"></div>
<div class="ig" style="left:99px;top:459px;height:19px"></div>
<div class="a" style="left:0;top:0;width:486px;height:503px;overflow:hidden">
<div class="ln" style="top:22px;color:#6e7681">1</div>
<div class="cl" style="top:22px"><span class="p">&lt;?php</span></div>
<div class="ln" style="top:41px;color:#6e7681">2</div>
<div class="cl" style="top:41px"><span class="c">// <span class="arb" style="width:142.3px">إضافة دعم لاستيراد</span> JSON <span class="arb" style="width:24.5px">عبر</span> HTTP POST</span></div>
<div class="ln" style="top:60px;color:#6e7681">3</div>
<div class="cl" style="top:60px"><span class="f">add_action</span><span class="b1">(</span><span class="s">&#x27;wp_ajax_import_json&#x27;</span><span class="w">, </span><span class="s">&#x27;handle_import_json_from_postman&#x27;</span><span class="b1">)</span><span class="w">;</span></div>
<div class="ln" style="top:79px;color:#6e7681">4</div>
<div class="cl" style="top:79px"><span class="f">add_action</span><span class="b1">(</span><span class="s">&#x27;wp_ajax_nopriv_import_json&#x27;</span><span class="w">, </span><span class="s">&#x27;handle_import_json_from_postman&#x27;</span><span class="b1">)</span><span class="w">;</span></div>
<div class="ln" style="top:98px;color:#6e7681">5</div>
<div class="ln" style="top:117px;color:#6e7681">6</div>
<div class="cl" style="top:117px"><span class="k">function</span> <span class="f">handle_import_json_from_postman</span><span class="b1">()</span> <span class="b1">{</span></div>
<div class="ln" style="top:136px;color:#6e7681">7</div>
<div class="cl" style="top:136px">    <span class="c">// <span class="arb" style="width:150px">التحقق من نوع الطلب</span></span></div>
<div class="ln" style="top:155px;color:#6e7681">8</div>
<div class="cl" style="top:155px">    <span class="q">if</span> <span class="b2">(</span><span class="v">$_SERVER</span><span class="b3">[</span><span class="s">&#x27;REQUEST_METHOD&#x27;</span><span class="b3">]</span><span class="w"> !== </span><span class="s">&#x27;POST&#x27;</span><span class="b2">)</span> <span class="b2">{</span></div>
<div class="ln" style="top:174px;color:#6e7681">9</div>
<div class="cl" style="top:174px">        <span class="f">wp_send_json_error</span><span class="b3">(</span><span class="s">&#x27;Invalid request method.&#x27;</span><span class="b3">)</span><span class="w">;</span></div>
<div class="ln" style="top:193px;color:#6e7681">10</div>
<div class="cl" style="top:193px">        <span class="q">return</span><span class="w">;</span></div>
<div class="ln" style="top:212px;color:#6e7681">11</div>
<div class="cl" style="top:212px">    <span class="b2">}</span></div>
<div class="ln" style="top:231px;color:#6e7681">12</div>
<div class="ln" style="top:250px;color:#6e7681">13</div>
<div class="cl" style="top:250px">    <span class="c">// <span class="arb" style="width:89.5px">قراءة محتوى</span> JSON <span class="arb" style="width:18px">من</span> input</span></div>
<div class="ln" style="top:269px;color:#cccccc">14</div>
<div class="cl" style="top:269px">    <span class="v">$json_data</span><span class="w"> = </span><span class="f">file_get_contents</span><span class="b2">(</span><span class="s">&#x27;php://input&#x27;</span><span class="b2">)</span><span class="w">;</span></div>
<div class="ln" style="top:288px;color:#6e7681">15</div>
<div class="cl" style="top:288px">    <span class="v">$json_data</span><span class="w"> = </span><span class="f">json_decode</span><span class="b2">(</span><span class="v">$json_data</span><span class="w">, </span><span class="p">true</span><span class="b2">)</span><span class="w">;</span></div>
<div class="ln" style="top:307px;color:#6e7681">16</div>
<div class="ln" style="top:326px;color:#6e7681">17</div>
<div class="cl" style="top:326px">    <span class="q">if</span> <span class="b2">(</span><span class="w">!</span><span class="f">is_array</span><span class="b3">(</span><span class="v">$json_data</span><span class="b3">)</span><span class="b2">)</span> <span class="b2">{</span></div>
<div class="ln" style="top:345px;color:#6e7681">18</div>
<div class="cl" style="top:345px">        <span class="f">wp_send_json_error</span><span class="b3">(</span><span class="s">&#x27;Invalid JSON format.&#x27;</span><span class="b3">)</span><span class="w">;</span></div>
<div class="ln" style="top:364px;color:#6e7681">19</div>
<div class="cl" style="top:364px">        <span class="q">return</span><span class="w">;</span></div>
<div class="ln" style="top:383px;color:#6e7681">20</div>
<div class="cl" style="top:383px">    <span class="b2">}</span></div>
<div class="ln" style="top:402px;color:#6e7681">21</div>
<div class="ln" style="top:421px;color:#6e7681">22</div>
<div class="cl" style="top:421px">    <span class="c">// <span class="arb" style="width:217px">معالجة البيانات وفقًا للكتل</span></span></div>
<div class="ln" style="top:440px;color:#6e7681">23</div>
<div class="cl" style="top:440px">    <span class="q">if</span> <span class="b2">(</span><span class="f">isset</span><span class="b3">(</span><span class="v">$json_data</span><span class="b1">[</span><span class="s">&#x27;posts&#x27;</span><span class="b1">]</span><span class="b3">)</span><span class="b2">)</span> <span class="b2">{</span></div>
<div class="ln" style="top:459px;color:#6e7681">24</div>
<div class="cl" style="top:459px">        <span class="f">process_posts_data</span><span class="b3">(</span><span class="v">$json_data</span><span class="b3">)</span><span class="w">;</span></div>
<div class="ln" style="top:478px;color:#6e7681">25</div>
<div class="cl" style="top:478px">    <span class="b2">}</span></div>
<div class="ln" style="top:497px;color:#6e7681">26</div>
</div>
<div class="a" style="left:486px;top:22px;width:6px;height:481px;background:linear-gradient(90deg,rgba(0,0,0,.35),rgba(0,0,0,0))"></div>
<div class="a" style="left:493px;top:22px;width:54px;height:481px;overflow:hidden">
<div class="a" style="left:0.0px;top:0px;width:4.8px;height:1.5px;background:#4a80b8;opacity:.8"></div>
<div class="a" style="left:0.0px;top:2px;width:2.9px;height:1.5px;background:#4f7a40;opacity:.8"></div>
<div class="a" style="left:2.9px;top:2px;width:17.3px;height:1.5px;background:#4f7a40;opacity:.8"></div>
<div class="a" style="left:20.2px;top:2px;width:4.8px;height:1.5px;background:#4f7a40;opacity:.8"></div>
<div class="a" style="left:25.0px;top:2px;width:2.9px;height:1.5px;background:#4f7a40;opacity:.8"></div>
<div class="a" style="left:27.8px;top:2px;width:8.6px;height:1.5px;background:#4f7a40;opacity:.8"></div>
<div class="a" style="left:0.0px;top:4px;width:9.6px;height:1.5px;background:#3b82c8;opacity:.8"></div>
<div class="a" style="left:9.6px;top:4px;width:1.0px;height:1.5px;background:#c8a800;opacity:.8"></div>
<div class="a" style="left:10.6px;top:4px;width:20.2px;height:1.5px;background:#c9a02c;opacity:.8"></div>
<div class="a" style="left:30.7px;top:4px;width:1.9px;height:1.5px;background:#8c8c8c;opacity:.8"></div>
<div class="a" style="left:32.6px;top:4px;width:31.7px;height:1.5px;background:#c9a02c;opacity:.8"></div>
<div class="a" style="left:64.3px;top:4px;width:1.9px;height:1.5px;background:#8c8c8c;opacity:.8"></div>
<div class="a" style="left:0.0px;top:6px;width:9.6px;height:1.5px;background:#3b82c8;opacity:.8"></div>
<div class="a" style="left:9.6px;top:6px;width:1.0px;height:1.5px;background:#c8a800;opacity:.8"></div>
<div class="a" style="left:10.6px;top:6px;width:26.9px;height:1.5px;background:#c9a02c;opacity:.8"></div>
<div class="a" style="left:37.4px;top:6px;width:1.9px;height:1.5px;background:#8c8c8c;opacity:.8"></div>
<div class="a" style="left:39.4px;top:6px;width:31.7px;height:1.5px;background:#c9a02c;opacity:.8"></div>
<div class="a" style="left:71.0px;top:6px;width:1.9px;height:1.5px;background:#8c8c8c;opacity:.8"></div>
<div class="a" style="left:0.0px;top:10px;width:7.7px;height:1.5px;background:#c04878;opacity:.8"></div>
<div class="a" style="left:8.6px;top:10px;width:29.8px;height:1.5px;background:#3b82c8;opacity:.8"></div>
<div class="a" style="left:38.4px;top:10px;width:3.8px;height:1.5px;background:#c8a800;opacity:.8"></div>
<div class="a" style="left:3.8px;top:12px;width:1.9px;height:1.5px;background:#4f7a40;opacity:.8"></div>
<div class="a" style="left:6.7px;top:12px;width:18.2px;height:1.5px;background:#4f7a40;opacity:.8"></div>
<div class="a" style="left:3.8px;top:14px;width:1.9px;height:1.5px;background:#a366b5;opacity:.8"></div>
<div class="a" style="left:6.7px;top:14px;width:8.6px;height:1.5px;background:#a4a4a4;opacity:.8"></div>
<div class="a" style="left:15.4px;top:14px;width:16.3px;height:1.5px;background:#c9a02c;opacity:.8"></div>
<div class="a" style="left:31.7px;top:14px;width:4.8px;height:1.5px;background:#8c8c8c;opacity:.8"></div>
<div class="a" style="left:36.5px;top:14px;width:5.8px;height:1.5px;background:#c9a02c;opacity:.8"></div>
<div class="a" style="left:42.2px;top:14px;width:2.9px;height:1.5px;background:#a366b5;opacity:.8"></div>
<div class="a" style="left:7.7px;top:16px;width:17.3px;height:1.5px;background:#3b82c8;opacity:.8"></div>
<div class="a" style="left:25.0px;top:16px;width:1.0px;height:1.5px;background:#c8a800;opacity:.8"></div>
<div class="a" style="left:25.9px;top:16px;width:24.0px;height:1.5px;background:#c9a02c;opacity:.8"></div>
<div class="a" style="left:49.9px;top:16px;width:1.9px;height:1.5px;background:#8c8c8c;opacity:.8"></div>
<div class="a" style="left:7.7px;top:18px;width:5.8px;height:1.5px;background:#a366b5;opacity:.8"></div>
<div class="a" style="left:13.4px;top:18px;width:1.0px;height:1.5px;background:#8c8c8c;opacity:.8"></div>
<div class="a" style="left:3.8px;top:20px;width:1.0px;height:1.5px;background:#a366b5;opacity:.8"></div>
<div class="a" style="left:3.8px;top:24px;width:1.9px;height:1.5px;background:#4f7a40;opacity:.8"></div>
<div class="a" style="left:6.7px;top:24px;width:10.6px;height:1.5px;background:#4f7a40;opacity:.8"></div>
<div class="a" style="left:17.3px;top:24px;width:5.8px;height:1.5px;background:#4f7a40;opacity:.8"></div>
<div class="a" style="left:23.0px;top:24px;width:1.9px;height:1.5px;background:#4f7a40;opacity:.8"></div>
<div class="a" style="left:25.0px;top:24px;width:5.8px;height:1.5px;background:#4f7a40;opacity:.8"></div>
<div class="a" style="left:3.8px;top:26px;width:9.6px;height:1.5px;background:#a4a4a4;opacity:.8"></div>
<div class="a" style="left:13.4px;top:26px;width:2.9px;height:1.5px;background:#8c8c8c;opacity:.8"></div>
<div class="a" style="left:16.3px;top:26px;width:16.3px;height:1.5px;background:#3b82c8;opacity:.8"></div>
<div class="a" style="left:32.6px;top:26px;width:1.0px;height:1.5px;background:#c8a800;opacity:.8"></div>
<div class="a" style="left:33.6px;top:26px;width:12.5px;height:1.5px;background:#c9a02c;opacity:.8"></div>
<div class="a" style="left:46.1px;top:26px;width:1.9px;height:1.5px;background:#8c8c8c;opacity:.8"></div>
<div class="a" style="left:3.8px;top:28px;width:9.6px;height:1.5px;background:#a4a4a4;opacity:.8"></div>
<div class="a" style="left:13.4px;top:28px;width:2.9px;height:1.5px;background:#8c8c8c;opacity:.8"></div>
<div class="a" style="left:16.3px;top:28px;width:10.6px;height:1.5px;background:#3b82c8;opacity:.8"></div>
<div class="a" style="left:26.9px;top:28px;width:1.0px;height:1.5px;background:#c8a800;opacity:.8"></div>
<div class="a" style="left:27.8px;top:28px;width:9.6px;height:1.5px;background:#a4a4a4;opacity:.8"></div>
<div class="a" style="left:37.4px;top:28px;width:1.9px;height:1.5px;background:#8c8c8c;opacity:.8"></div>
<div class="a" style="left:39.4px;top:28px;width:3.8px;height:1.5px;background:#4a80b8;opacity:.8"></div>
<div class="a" style="left:43.2px;top:28px;width:1.9px;height:1.5px;background:#8c8c8c;opacity:.8"></div>
<div class="a" style="left:3.8px;top:32px;width:1.9px;height:1.5px;background:#a366b5;opacity:.8"></div>
<div class="a" style="left:6.7px;top:32px;width:1.9px;height:1.5px;background:#8c8c8c;opacity:.8"></div>
<div class="a" style="left:8.6px;top:32px;width:7.7px;height:1.5px;background:#3b82c8;opacity:.8"></div>
<div class="a" style="left:16.3px;top:32px;width:1.0px;height:1.5px;background:#c8a800;opacity:.8"></div>
<div class="a" style="left:17.3px;top:32px;width:9.6px;height:1.5px;background:#a4a4a4;opacity:.8"></div>
<div class="a" style="left:26.9px;top:32px;width:1.9px;height:1.5px;background:#c8a800;opacity:.8"></div>
<div class="a" style="left:28.8px;top:32px;width:1.9px;height:1.5px;background:#a366b5;opacity:.8"></div>
<div class="a" style="left:7.7px;top:34px;width:17.3px;height:1.5px;background:#3b82c8;opacity:.8"></div>
<div class="a" style="left:25.0px;top:34px;width:1.0px;height:1.5px;background:#c8a800;opacity:.8"></div>
<div class="a" style="left:25.9px;top:34px;width:21.1px;height:1.5px;background:#c9a02c;opacity:.8"></div>
<div class="a" style="left:47.0px;top:34px;width:1.9px;height:1.5px;background:#8c8c8c;opacity:.8"></div>
<div class="a" style="left:7.7px;top:36px;width:5.8px;height:1.5px;background:#a366b5;opacity:.8"></div>
<div class="a" style="left:13.4px;top:36px;width:1.0px;height:1.5px;background:#8c8c8c;opacity:.8"></div>
<div class="a" style="left:3.8px;top:38px;width:1.0px;height:1.5px;background:#a366b5;opacity:.8"></div>
<div class="a" style="left:3.8px;top:42px;width:1.9px;height:1.5px;background:#4f7a40;opacity:.8"></div>
<div class="a" style="left:6.7px;top:42px;width:25.9px;height:1.5px;background:#4f7a40;opacity:.8"></div>
<div class="a" style="left:3.8px;top:44px;width:1.9px;height:1.5px;background:#a366b5;opacity:.8"></div>
<div class="a" style="left:6.7px;top:44px;width:1.0px;height:1.5px;background:#c8a800;opacity:.8"></div>
<div class="a" style="left:7.7px;top:44px;width:4.8px;height:1.5px;background:#3b82c8;opacity:.8"></div>
<div class="a" style="left:12.5px;top:44px;width:1.0px;height:1.5px;background:#c8a800;opacity:.8"></div>
<div class="a" style="left:13.4px;top:44px;width:9.6px;height:1.5px;background:#a4a4a4;opacity:.8"></div>
<div class="a" style="left:23.0px;top:44px;width:1.0px;height:1.5px;background:#c8a800;opacity:.8"></div>
<div class="a" style="left:24.0px;top:44px;width:6.7px;height:1.5px;background:#c9a02c;opacity:.8"></div>
<div class="a" style="left:30.7px;top:44px;width:2.9px;height:1.5px;background:#c8a800;opacity:.8"></div>
<div class="a" style="left:33.6px;top:44px;width:1.9px;height:1.5px;background:#a366b5;opacity:.8"></div>
<div class="a" style="left:7.7px;top:46px;width:17.3px;height:1.5px;background:#3b82c8;opacity:.8"></div>
<div class="a" style="left:25.0px;top:46px;width:1.0px;height:1.5px;background:#c8a800;opacity:.8"></div>
<div class="a" style="left:25.9px;top:46px;width:9.6px;height:1.5px;background:#a4a4a4;opacity:.8"></div>
<div class="a" style="left:35.5px;top:46px;width:1.9px;height:1.5px;background:#8c8c8c;opacity:.8"></div>
<div class="a" style="left:3.8px;top:48px;width:1.0px;height:1.5px;background:#a366b5;opacity:.8"></div>
<div class="a" style="left:3.8px;top:52px;width:1.9px;height:1.5px;background:#4f7a40;opacity:.8"></div>
<div class="a" style="left:6.7px;top:52px;width:28.8px;height:1.5px;background:#4f7a40;opacity:.8"></div>
<div class="a" style="left:3.8px;top:54px;width:1.9px;height:1.5px;background:#a366b5;opacity:.8"></div>
<div class="a" style="left:6.7px;top:54px;width:1.0px;height:1.5px;background:#c8a800;opacity:.8"></div>
<div class="a" style="left:7.7px;top:54px;width:4.8px;height:1.5px;background:#3b82c8;opacity:.8"></div>
<div class="a" style="left:12.5px;top:54px;width:1.0px;height:1.5px;background:#c8a800;opacity:.8"></div>
<div class="a" style="left:13.4px;top:54px;width:9.6px;height:1.5px;background:#a4a4a4;opacity:.8"></div>
<div class="a" style="left:23.0px;top:54px;width:1.0px;height:1.5px;background:#c8a800;opacity:.8"></div>
<div class="a" style="left:24.0px;top:54px;width:11.5px;height:1.5px;background:#c9a02c;opacity:.8"></div>
<div class="a" style="left:35.5px;top:54px;width:2.9px;height:1.5px;background:#c8a800;opacity:.8"></div>
<div class="a" style="left:38.4px;top:54px;width:1.9px;height:1.5px;background:#a366b5;opacity:.8"></div>
<div class="a" style="left:7.7px;top:56px;width:20.2px;height:1.5px;background:#3b82c8;opacity:.8"></div>
<div class="a" style="left:27.8px;top:56px;width:1.0px;height:1.5px;background:#c8a800;opacity:.8"></div>
<div class="a" style="left:28.8px;top:56px;width:9.6px;height:1.5px;background:#a4a4a4;opacity:.8"></div>
<div class="a" style="left:38.4px;top:56px;width:1.9px;height:1.5px;background:#8c8c8c;opacity:.8"></div>
<div class="a" style="left:3.8px;top:58px;width:1.0px;height:1.5px;background:#a366b5;opacity:.8"></div>
<div class="a" style="left:3.8px;top:62px;width:1.9px;height:1.5px;background:#4f7a40;opacity:.8"></div>
<div class="a" style="left:6.7px;top:62px;width:28.8px;height:1.5px;background:#4f7a40;opacity:.8"></div>
<div class="a" style="left:3.8px;top:64px;width:1.9px;height:1.5px;background:#a366b5;opacity:.8"></div>
<div class="a" style="left:6.7px;top:64px;width:1.0px;height:1.5px;background:#c8a800;opacity:.8"></div>
<div class="a" style="left:7.7px;top:64px;width:4.8px;height:1.5px;background:#3b82c8;opacity:.8"></div>
<div class="a" style="left:12.5px;top:64px;width:1.0px;height:1.5px;background:#c8a800;opacity:.8"></div>
<div class="a" style="left:13.4px;top:64px;width:9.6px;height:1.5px;background:#a4a4a4;opacity:.8"></div>
<div class="a" style="left:23.0px;top:64px;width:1.0px;height:1.5px;background:#c8a800;opacity:.8"></div>
<div class="a" style="left:24.0px;top:64px;width:9.6px;height:1.5px;background:#c9a02c;opacity:.8"></div>
<div class="a" style="left:33.6px;top:64px;width:2.9px;height:1.5px;background:#c8a800;opacity:.8"></div>
<div class="a" style="left:36.5px;top:64px;width:1.9px;height:1.5px;background:#a366b5;opacity:.8"></div>
<div class="a" style="left:41.3px;top:64px;width:5.8px;height:1.5px;background:#8c8c8c;opacity:.8"></div>
<div class="a" style="left:7.7px;top:66px;width:21.1px;height:1.5px;background:#3b82c8;opacity:.8"></div>
<div class="a" style="left:28.8px;top:66px;width:1.0px;height:1.5px;background:#c8a800;opacity:.8"></div>
<div class="a" style="left:29.8px;top:66px;width:9.6px;height:1.5px;background:#a4a4a4;opacity:.8"></div>
<div class="a" style="left:39.4px;top:66px;width:1.9px;height:1.5px;background:#8c8c8c;opacity:.8"></div>
<div class="a" style="left:3.8px;top:68px;width:1.0px;height:1.5px;background:#a366b5;opacity:.8"></div>
<div class="a" style="left:3.8px;top:72px;width:1.9px;height:1.5px;background:#4f7a40;opacity:.8"></div>
<div class="a" style="left:6.7px;top:72px;width:19.2px;height:1.5px;background:#4f7a40;opacity:.8"></div>
<div class="a" style="left:25.9px;top:72px;width:3.8px;height:1.5px;background:#4f7a40;opacity:.8"></div>
<div class="a" style="left:29.8px;top:72px;width:7.7px;height:1.5px;background:#4f7a40;opacity:.8"></div>
<div class="a" style="left:3.8px;top:74px;width:14.4px;height:1.5px;background:#3b82c8;opacity:.8"></div>
<div class="a" style="left:18.2px;top:74px;width:1.0px;height:1.5px;background:#c8a800;opacity:.8"></div>
<div class="a" style="left:19.2px;top:74px;width:26.9px;height:1.5px;background:#c9a02c;opacity:.8"></div>
<div class="a" style="left:46.1px;top:74px;width:1.9px;height:1.5px;background:#8c8c8c;opacity:.8"></div>
<div class="a" style="left:48.0px;top:74px;width:9.6px;height:1.5px;background:#c9a02c;opacity:.8"></div>
<div class="a" style="left:57.6px;top:74px;width:3.8px;height:1.5px;background:#8c8c8c;opacity:.8"></div>
<div class="a" style="left:3.8px;top:78px;width:1.9px;height:1.5px;background:#4f7a40;opacity:.8"></div>
<div class="a" style="left:6.7px;top:78px;width:17.3px;height:1.5px;background:#4f7a40;opacity:.8"></div>
<div class="a" style="left:24.0px;top:78px;width:3.8px;height:1.5px;background:#4f7a40;opacity:.8"></div>
<div class="a" style="left:27.8px;top:78px;width:5.8px;height:1.5px;background:#4f7a40;opacity:.8"></div>
<div class="a" style="left:3.8px;top:80px;width:17.3px;height:1.5px;background:#3b82c8;opacity:.8"></div>
<div class="a" style="left:21.1px;top:80px;width:1.0px;height:1.5px;background:#c8a800;opacity:.8"></div>
<div class="a" style="left:22.1px;top:80px;width:13.4px;height:1.5px;background:#c9a02c;opacity:.8"></div>
<div class="a" style="left:35.5px;top:80px;width:23.0px;height:1.5px;background:#c9a02c;opacity:.8"></div>
<div class="a" style="left:58.6px;top:80px;width:1.9px;height:1.5px;background:#8c8c8c;opacity:.8"></div>
<div class="a" style="left:3.8px;top:82px;width:5.8px;height:1.5px;background:#a366b5;opacity:.8"></div>
<div class="a" style="left:9.6px;top:82px;width:1.0px;height:1.5px;background:#8c8c8c;opacity:.8"></div>
<div class="a" style="left:0.0px;top:84px;width:1.0px;height:1.5px;background:#c8a800;opacity:.8"></div>
<div class="a" style="left:0;top:0;width:54px;height:90px;background:repeating-linear-gradient(90deg,rgba(20,21,23,0) 0 2px,rgba(20,21,23,.6) 2px 3px)"></div>
</div>
<div class="a" style="left:547px;top:22px;width:14px;height:481px;background:#121315;border-left:1px solid #1f2023"></div>
<div class="a" style="left:548px;top:116px;width:13px;height:2px;background:#8a8a8a"></div>
</div>
</div>
<!-- watermark -->
<svg style="left:10px;top:548px" width="84" height="68" viewBox="0 0 84 68">
<defs><linearGradient id="gd" x1="0" y1="0" x2="1" y2="1"><stop offset="0" stop-color="#e9cf8f"/><stop offset="1" stop-color="#b8893a"/></linearGradient></defs>
<path d="M27.5 6.5Q32 6.5 37.5 4Q43 6.5 48 6.5Q48 19 37.5 26Q27.5 19 27.5 6.5Z" fill="#16242f" stroke="url(#gd)" stroke-width="2"/>
<path d="M31 20L38.6 34L60 4Q48 14 39 27Z" fill="url(#gd)"/>
<g fill="url(#gd)">
<path d="M2.6 23.6Q10 25 15.6 32.4Q9 31 2.6 23.6Z"/><path d="M7 30.8Q17 32.6 25.6 41.4Q15.4 39.6 7 30.8Z"/><path d="M13.6 38.6Q26 40 35 46.2Q23 48.6 13.6 38.6Z"/>
<path d="M77.4 20Q69.6 22.4 65.2 30.8Q72.4 27.8 77.4 20Z"/><path d="M73.4 28Q63.4 30.4 57 38.6Q66.6 36 73.4 28Z"/><path d="M68.6 35.6Q56.6 37 48.6 44.8Q60 46.6 68.6 35.6Z"/>
<path d="M33 45.4Q40 42 49 44.4Q42 46.6 33 45.4Z"/>
</g>
<text x="41" y="66.4" text-anchor="middle" font-family="Liberation Sans, sans-serif" font-size="7.2" font-weight="bold" fill="#e6d8b0" direction="rtl">المنتدى العربي للدفاع والتسليح</text>
</svg>
</div></body></html>
